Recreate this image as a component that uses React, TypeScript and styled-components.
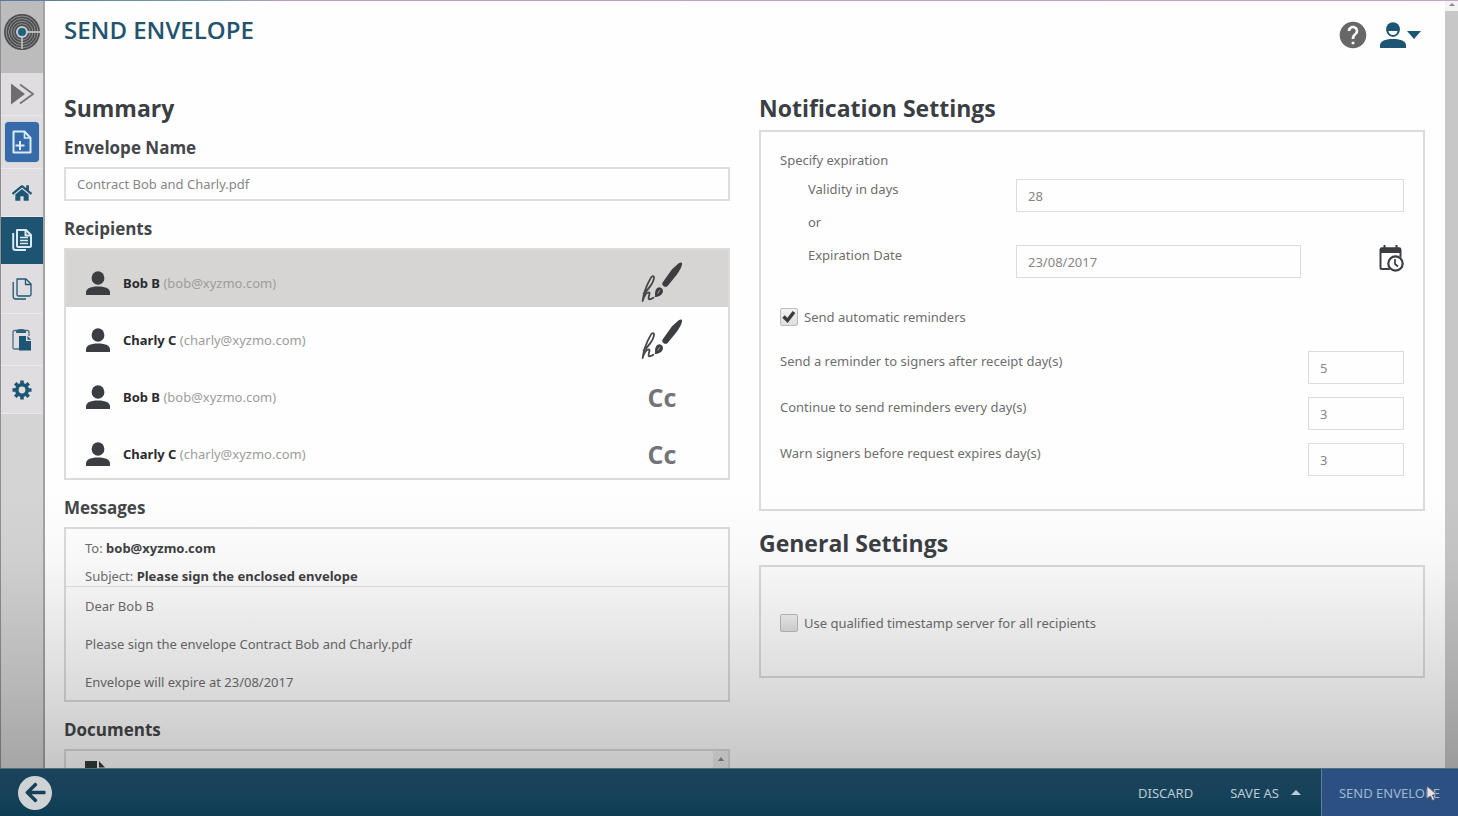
import React from "react";
import styled, { createGlobalStyle, css } from "styled-components";
import { MdHelp } from "react-icons/md";
import { FaHome, FaArrowLeft } from "react-icons/fa";

const GlobalStyle = createGlobalStyle`
  * { box-sizing: border-box; }
  body {
    margin: 0;
    background: #fefefe;
    color: #6e6e6e;
    font-family: "Noto Sans", "Open Sans", sans-serif;
    font-size: 13px;
    line-height: 20px;
    overflow: hidden;
  }
  button, input { font: inherit; color: inherit; margin: 0; }
  button { border: 0; padding: 0; background: none; cursor: pointer; }
  svg { display: block; }
`;

const Shell = styled.div`
  display: flex;
  flex-direction: column;
  height: 100vh;
  position: relative;
`;

const TopEdge = styled.div`
  position: absolute;
  inset: 0 0 auto 0;
  height: 1px;
  background: linear-gradient(90deg, #54799a, #7f9dbd 15%, #c39cc4 20%, #c9a2c6);
`;

const Workspace = styled.div`
  position: relative;
  flex: 1;
  min-height: 0;
  display: flex;
`;

const Shade = styled.div`
  position: absolute;
  inset: 64% 0 0 0;
  pointer-events: none;
  background: linear-gradient(rgba(0, 0, 0, 0), rgba(0, 0, 0, 0.025) 24%, rgba(0, 0, 0, 0.13) 68%, rgba(0, 0, 0, 0.22));
`;

const Sidebar = styled.nav`
  width: 45px;
  flex: none;
  background: #d5d4d4;
  border-left: 1px solid #8f8f8f;
  border-right: 2px solid #a3a3a3;
`;

const Logo = styled.a`
  display: flex;
  justify-content: center;
  height: 73px;
  padding-top: 14px;
  background: #bcbcbc;
`;

const NavButton = styled.button<{ $height: number; $active?: boolean }>`
  display: flex;
  align-items: center;
  justify-content: center;
  width: 100%;
  height: ${(p) => p.$height}px;
  color: #1d5674;
  background: ${(p) => (p.$active ? "#1c5472" : "#dfdddf")};
  border-bottom: 1px solid #eae9ea;
  ${(p) => p.$active && css`color: #dcebf3; border-color: #1c5472;`}
`;

const NewTile = styled.span`
  display: flex;
  align-items: center;
  justify-content: center;
  width: 34px;
  height: 40px;
  border-radius: 4px;
  background: #356ba8;
  box-shadow: 0 0 1px #6d8fb7;
`;

const Main = styled.main`
  flex: 1;
  min-width: 0;
  padding: 0 20px 0 19px;
  overflow: hidden;
`;

const Header = styled.header`
  display: flex;
  justify-content: space-between;
  align-items: flex-start;
  height: 92px;
  padding: 14px 4px 0 0;
`;

const Title = styled.h1`
  margin: 0;
  font-family: "Open Sans", sans-serif;
  font-size: 24px;
  line-height: 32px;
  font-weight: 600;
  color: #23536e;
`;

const HeaderTools = styled.div`
  display: flex;
  align-items: center;
  gap: 11px;
  padding-top: 5px;
  color: #686767;
`;

const Columns = styled.div`
  display: grid;
  grid-template-columns: 1fr 1fr;
  gap: 29px;
`;

const Column = styled.div`
  display: flex;
  flex-direction: column;
  gap: 16px;
  min-width: 0;
`;

const SectionTitle = styled.h2`
  margin: 0 0 6px;
  font-family: "Open Sans", sans-serif;
  font-size: 23px;
  line-height: 32px;
  font-weight: 700;
  color: #3b3e43;
`;

const Subsection = styled.div`
  padding-top: 6px;
`;

const SubTitle = styled.h3`
  display: block;
  margin: 0 0 7px;
  font-family: "Open Sans", sans-serif;
  font-size: 17px;
  line-height: 24px;
  font-weight: 700;
  color: #44464a;
`;

const Box = styled.div`
  border: 2px solid #dbdbdb;
  background: #fefefe;
`;

const TextInput = styled.input<{ $strong?: boolean; $small?: boolean }>`
  display: block;
  width: ${(p) => (p.$small ? "96px" : "100%")};
  min-width: 0;
  height: ${(p) => (p.$strong ? 34 : 33)}px;
  padding: 0 11px;
  border: ${(p) => (p.$strong ? "2px solid #dedede" : "1px solid #dcdcdc")};
  border-radius: 0;
  background: #fefefe;
  color: #868686;
  outline: 0;
`;

const RecipientList = styled.ul`
  margin: 0;
  padding: 0;
  list-style: none;
  border: 2px solid #dbdbdb;
`;

const Recipient = styled.li<{ $selected: boolean }>`
  display: flex;
  align-items: center;
  height: 57px;
  padding: 9px 41px 0 20px;
  color: #9c9c9c;
  background: ${(p) => (p.$selected ? "#d6d5d4" : "transparent")};
`;

const Avatar = styled.span`
  color: #3a3d42;
`;

const RecipientName = styled.span`
  flex: 1;
  padding-left: 13px;
`;

const Name = styled.b`
  font-weight: 700;
  color: #2a2b2e;
`;

const Role = styled.span`
  display: flex;
  justify-content: center;
  width: 50px;
  font-family: "Open Sans", sans-serif;
  font-size: 25px;
  line-height: 32px;
  font-weight: 700;
  color: #737477;
`;

const MessageHead = styled.div`
  display: flex;
  flex-direction: column;
  gap: 8px;
  padding: 9px 19px 0;
  border-bottom: 1px solid #e2e2e2;
  b { color: #3f4043; }
`;

const MessageBody = styled.div`
  display: flex;
  flex-direction: column;
  gap: 18px;
  padding: 9px 19px 8px;
  p { margin: 0; }
`;

const DocumentsBox = styled(Box)`
  display: flex;
  justify-content: space-between;
  height: 140px;
  padding-left: 19px;
`;

const DocIcon = styled.div`
  padding-top: 10px;
`;

const MiniScroll = styled.div`
  width: 15px;
  padding-top: 6px;
  background: #eeeeee;
`;

const SettingsBox = styled(Box)`
  padding: 18px 19px 33px;
`;

const ExpirationRow = styled.div`
  display: grid;
  grid-template-columns: 208px 1fr;
  align-items: start;
  padding-left: 28px;
`;

const Or = styled.div`
  padding: 0 0 13px 28px;
`;

const Specify = styled.div`
  padding-bottom: 9px;
`;

const DateField = styled.div`
  display: flex;
  justify-content: space-between;
  align-items: flex-start;
  gap: 78px;
`;

const CheckRow = styled.label<{ $section?: boolean }>`
  display: flex;
  align-items: center;
  gap: 6px;
  ${(p) => p.$section && css`padding: 29px 0 24px;`}
`;

const Check = styled.input`
  appearance: none;
  flex: none;
  width: 18px;
  height: 18px;
  border: 1px solid #bcbcbc;
  border-radius: 2px;
  background: linear-gradient(#f3f3f3, #dedede);
`;

const CheckHolder = styled.span`
  position: relative;
  display: flex;
  svg { position: absolute; inset: 0; pointer-events: none; }
`;

const ReminderRow = styled.div`
  display: flex;
  justify-content: space-between;
  align-items: flex-start;
  & + & { padding-top: 13px; }
`;

const GeneralBox = styled(Box)`
  padding: 46px 19px 43px;
`;

const ScrollTrack = styled.div`
  display: flex;
  flex-direction: column;
  gap: 5px;
  width: 13px;
  flex: none;
  padding-top: 3px;
  background: #f3f3f3;
`;

const ScrollThumb = styled.div`
  flex: 1;
  background: #c7c7c7;
`;

const Footer = styled.footer`
  display: flex;
  align-items: stretch;
  height: 48px;
  flex: none;
  padding-left: 18px;
  color: #b9cbd5;
  background: linear-gradient(#1b435c, #184259 55%, #0a3d54);
  border-top: 1px solid #4d6f80;
`;

const BackButton = styled.button`
  align-self: center;
  display: flex;
  align-items: center;
  justify-content: center;
  width: 34px;
  height: 34px;
  margin-right: auto;
  border-radius: 50%;
  background: #d0d3d6;
  color: #163f58;
`;

const FooterButton = styled.button<{ $primary?: boolean }>`
  display: flex;
  align-items: center;
  gap: 12px;
  padding: 0 20px 0 17px;
  ${(p) =>
    p.$primary &&
    css`
      padding: 0 18px 0 17px;
      color: #9fb8d6;
      background: #2b5081;
      border-left: 1px solid #5f7f9f;
    `}
`;

const SendLabel = styled.span`
  position: relative;
`;

const Pointer = styled.svg`
  position: absolute;
  right: 2px;
  top: 3px;
`;

const Person = ({ size = 24, smile = false }: { size?: number; smile?: boolean }) => (
  <svg width={size} height={size} viewBox="0 0 24 24" fill="currentColor" aria-hidden="true">
    <ellipse cx="12" cy="7" rx="6.4" ry="6.8" />
    {smile && <path d="M7.8 8.300h8.400c-.4 2.600-2 3.600-4.200 3.600s-3.800-1-4.200-3.600z" fill="#fff" />}
    <path d="M0 24v-2.400C0 17.800 4 15.600 12 15.600s12 2.200 12 6V24z" />
  </svg>
);

const SignIcon = () => (
  <svg width="42" height="42" viewBox="0 0 42 42" fill="none" aria-label="Signer" role="img">
    <path d="M40.800.8c-1.400-.8-3.400.6-5 2.200L31 7.200 21.600 20.600c-.8 1.400-.3 2.400.8 3.300 1.200 1 2.800 1.400 4 .3L36 12.600C38.500 9 42 3 40.800.8z" fill="#3c3e42" />
    <path d="M18.500 25.200c2 .2 3.600 1.800 3.500 3.800-.2 3.400-3.500 6-8.500 6 1-1 .4-2.400.6-4.600.3-3 2-5.300 4.400-5.200z" fill="#3c3e42" />
    <path d="M17 31.500c.2-1.600 1-2.600 2.200-3.200" stroke="#b9b9b9" strokeWidth="1" />
    <path d="M2.600 31.500C7 28 12.600 20.500 13 16c.2-2.800-2.200-2.200-3.600.6C6 22.500 2.500 32 1.600 39c1.400-4.400 3.800-8.600 6.200-8.600 2 0-.8 4.600-.2 6.200.5 1.300 2.600.5 4.800-.8" stroke="#46474b" strokeWidth="1.800" strokeLinecap="round" strokeLinejoin="round" />
  </svg>
);

const LogoMark = () => (
  <svg width="36" height="36" viewBox="0 0 36 36" fill="none" aria-hidden="true">
    <circle cx="18" cy="18" r="18" fill="#4c4d4e" />
    {[16, 13.4, 10.8, 8.2].map((r) => (
      <circle key={r} cx="18" cy="18" r={r} stroke="#a0a2a3" strokeWidth=".8" />
    ))}
    <path d="M18 22v13M23 18h13" stroke="#b7b8b8" strokeWidth="1.800" />
    <circle cx="18" cy="18" r="6" fill="#c4cdd2" />
    <circle cx="18" cy="18" r="4" fill="#245e80" />
  </svg>
);

const ForwardIcon = () => (
  <svg width="24" height="22" viewBox="0 0 24 22" fill="none" aria-hidden="true">
    <path d="M1 .5L15 11 1 21.500z" fill="#6f6e6f" />
    <path d="M10 1.500L23 11 10 20.500" stroke="#777677" strokeWidth="1.800" />
  </svg>
);

const NewDocIcon = () => (
  <svg width="20" height="24" viewBox="0 0 20 24" fill="none" stroke="#dcebfa" strokeWidth="2" aria-hidden="true">
    <path d="M1.500 1.500h11L18.500 8v14.500h-17z" strokeLinejoin="round" />
    <path d="M12.500 2v6h6" strokeWidth="1.600" />
    <path d="M8 11v9M3.500 15.500h9" />
  </svg>
);

const PagesIcon = ({ filled = false }: { filled?: boolean }) => (
  <svg width="20" height="22" viewBox="0 0 20 22" fill="none" stroke="currentColor" strokeWidth={filled ? 2 : 1.3} strokeLinejoin="round" aria-hidden="true">
    <path d="M5 1h9l5 5v10.500q0 1.500-1.500 1.500H6.500Q5 18 5 16.500z" />
    <path d="M13.500 1v5.500H19" />
    <path d="M1.200 4v14.500q0 2.500 2.500 2.500H14" />
    {filled && <path d="M8 8.500h8M8 11.500h8M8 14.500h8" strokeWidth="1.600" />}
  </svg>
);

const PasteIcon = () => (
  <svg width="20" height="22" viewBox="0 0 20 22" fill="none" aria-hidden="true">
    <path d="M8 20H2.500Q1 20 1 18.500V3q0-1.500 1.500-1.500h13Q17 1.500 17 3v4" stroke="#4c7088" strokeWidth="1.300" />
    <path d="M4 2.500Q4 0 9 0t5 2.500V4H4z" fill="#2c5f7c" />
    <path d="M7 7h7v5h5v9.500H7z" fill="#1d5674" />
    <path d="M15.500 7l3.500 3.700h-3.500z" fill="#1d5674" />
  </svg>
);

const GearIcon = () => (
  <svg width="20" height="20" viewBox="0 0 20 20" fill="none" stroke="#1d5674" aria-hidden="true">
    <circle cx="10" cy="10" r="5.200" strokeWidth="3.600" />
    {[0, 45, 90, 135].map((a) => (
      <path key={a} d="M10 .5v3.500M10 16v3.500" strokeWidth="3.600" transform={`rotate(${a} 10 10)`} />
    ))}
  </svg>
);

const CalendarClock = () => (
  <svg width="25" height="27" viewBox="0 0 25 27" fill="none" stroke="#3a3d42" aria-hidden="true">
    <rect x="1.500" y="3.500" width="20" height="20.500" rx="1.500" strokeWidth="2" />
    <path d="M1.500 3h20v4.500h-20z" fill="#3a3d42" />
    <path d="M5.500 0v4M17.500 0v4" strokeWidth="2" />
    <circle cx="16.500" cy="18.500" r="8" fill="#fefefe" stroke="#fefefe" />
    <circle cx="16.500" cy="18.500" r="7.200" fill="#fefefe" strokeWidth="2.200" />
    <path d="M16 14v5l3 2.500" strokeWidth="1.700" />
  </svg>
);

const Triangle = ({ width, height, up = false }: { width: number; height: number; up?: boolean }) => (
  <svg width={width} height={height} viewBox="0 0 10 10" preserveAspectRatio="none" fill="currentColor" aria-hidden="true">
    <path d={up ? "M0 10L5 0l5 10z" : "M0 0h10L5 10z"} />
  </svg>
);

const AccountButton = styled.button`
  display: flex;
  align-items: center;
  gap: 1px;
  color: #1d5674;
`;

const SmallArrow = styled.div`
  display: flex;
  justify-content: center;
  color: #8b8b8b;
`;

const recipients = [
  { name: "Bob B", email: "bob@xyzmo.com", signer: true },
  { name: "Charly C", email: "charly@xyzmo.com", signer: true },
  { name: "Bob B", email: "bob@xyzmo.com", signer: false },
  { name: "Charly C", email: "charly@xyzmo.com", signer: false },
];

const reminders = [
  { id: "receipt", label: "Send a reminder to signers after receipt day(s)", value: "5" },
  { id: "every", label: "Continue to send reminders every day(s)", value: "3" },
  { id: "warn", label: "Warn signers before request expires day(s)", value: "3" },
];

export default function App() {
  return (
    <Shell>
      <GlobalStyle />
      <Workspace>
        <Sidebar aria-label="Main">
          <Logo href="#" aria-label="Home page"><LogoMark /></Logo>
          <NavButton $height={43} aria-label="Expand menu"><ForwardIcon /></NavButton>
          <NavButton $height={53} aria-label="New envelope"><NewTile><NewDocIcon /></NewTile></NavButton>
          <NavButton $height={48} aria-label="Home"><FaHome size={20} /></NavButton>
          <NavButton $height={47} $active aria-label="Envelopes"><PagesIcon filled /></NavButton>
          <NavButton $height={50} aria-label="Templates"><PagesIcon /></NavButton>
          <NavButton $height={52} aria-label="Clipboard"><PasteIcon /></NavButton>
          <NavButton $height={48} aria-label="Settings"><GearIcon /></NavButton>
        </Sidebar>

        <Main>
          <Header>
            <Title>SEND ENVELOPE</Title>
            <HeaderTools>
              <MdHelp size={32} />
              <AccountButton aria-label="Account">
                <Person size={26} smile />
                <Triangle width={14} height={8} />
              </AccountButton>
            </HeaderTools>
          </Header>

          <Columns>
            <Column>
              <section>
                <SectionTitle>Summary</SectionTitle>
                <Subsection>
                  <SubTitle as="label" htmlFor="envelope-name">Envelope Name</SubTitle>
                  <TextInput id="envelope-name" $strong defaultValue="Contract Bob and Charly.pdf" />
                </Subsection>
              </section>

              <section>
                <SubTitle>Recipients</SubTitle>
                <RecipientList>
                  {recipients.map((r, i) => (
                    <Recipient key={i} $selected={i === 0}>
                      <Avatar><Person /></Avatar>
                      <RecipientName><Name>{r.name}</Name> ({r.email})</RecipientName>
                      <Role>{r.signer ? <SignIcon /> : "Cc"}</Role>
                    </Recipient>
                  ))}
                </RecipientList>
              </section>

              <section>
                <SubTitle>Messages</SubTitle>
                <Box>
                  <MessageHead>
                    <div>To: <b>bob@xyzmo.com</b></div>
                    <div>Subject: <b>Please sign the enclosed envelope</b></div>
                  </MessageHead>
                  <MessageBody>
                    <p>Dear Bob B</p>
                    <p>Please sign the envelope Contract Bob and Charly.pdf</p>
                    <p>Envelope will expire at 23/08/2017</p>
                  </MessageBody>
                </Box>
              </section>

              <section>
                <SubTitle>Documents</SubTitle>
                <DocumentsBox>
                  <DocIcon>
                    <svg width="20" height="26" viewBox="0 0 20 26" fill="#333d37" aria-hidden="true">
                      <path d="M0 0h12v8h8v18H0z" />
                      <path d="M14 0l6 6.500h-6z" />
                    </svg>
                  </DocIcon>
                  <MiniScroll><SmallArrow><Triangle width={6} height={4} up /></SmallArrow></MiniScroll>
                </DocumentsBox>
              </section>
            </Column>

            <Column>
              <section>
                <SectionTitle>Notification Settings</SectionTitle>
                <SettingsBox>
                  <Specify>Specify expiration</Specify>
                  <ExpirationRow>
                    <label htmlFor="validity">Validity in days</label>
                    <TextInput id="validity" defaultValue="28" />
                  </ExpirationRow>
                  <Or>or</Or>
                  <ExpirationRow>
                    <label htmlFor="expires">Expiration Date</label>
                    <DateField>
                      <TextInput id="expires" defaultValue="23/08/2017" />
                      <button aria-label="Pick a date"><CalendarClock /></button>
                    </DateField>
                  </ExpirationRow>
                  <CheckRow $section>
                    <CheckHolder>
                      <Check type="checkbox" defaultChecked />
                      <svg width="18" height="18" viewBox="0 0 18 18" fill="none" stroke="#3c3c3c" strokeWidth="3.400" aria-hidden="true">
                        <path d="M3.500 8.500l4 4L14 4" />
                      </svg>
                    </CheckHolder>
                    Send automatic reminders
                  </CheckRow>
                  {reminders.map((r) => (
                    <ReminderRow key={r.id}>
                      <label htmlFor={r.id}>{r.label}</label>
                      <TextInput id={r.id} $small defaultValue={r.value} />
                    </ReminderRow>
                  ))}
                </SettingsBox>
              </section>

              <section>
                <SectionTitle>General Settings</SectionTitle>
                <GeneralBox>
                  <CheckRow>
                    <Check type="checkbox" />
                    Use qualified timestamp server for all recipients
                  </CheckRow>
                </GeneralBox>
              </section>
            </Column>
          </Columns>
        </Main>

        <ScrollTrack>
          <SmallArrow><Triangle width={6} height={3} up /></SmallArrow>
          <ScrollThumb />
        </ScrollTrack>
        <Shade />
      </Workspace>

      <Footer>
        <BackButton aria-label="Back"><FaArrowLeft size={23} /></BackButton>
        <FooterButton>DISCARD</FooterButton>
        <FooterButton>SAVE AS <Triangle width={10} height={5} up /></FooterButton>
        <FooterButton $primary>
          <SendLabel>
            SEND ENVELOPE
            <Pointer width="12" height="15" viewBox="0 0 12 15" aria-hidden="true">
              <path d="M1 0l9.500 8.500-4 .5 2.300 4.500-2.300 1L4.500 10 1 12.500z" fill="#e4e2e6" stroke="#5a5264" strokeWidth=".8" />
            </Pointer>
          </SendLabel>
        </FooterButton>
      </Footer>
      <TopEdge />
    </Shell>
  );
}
